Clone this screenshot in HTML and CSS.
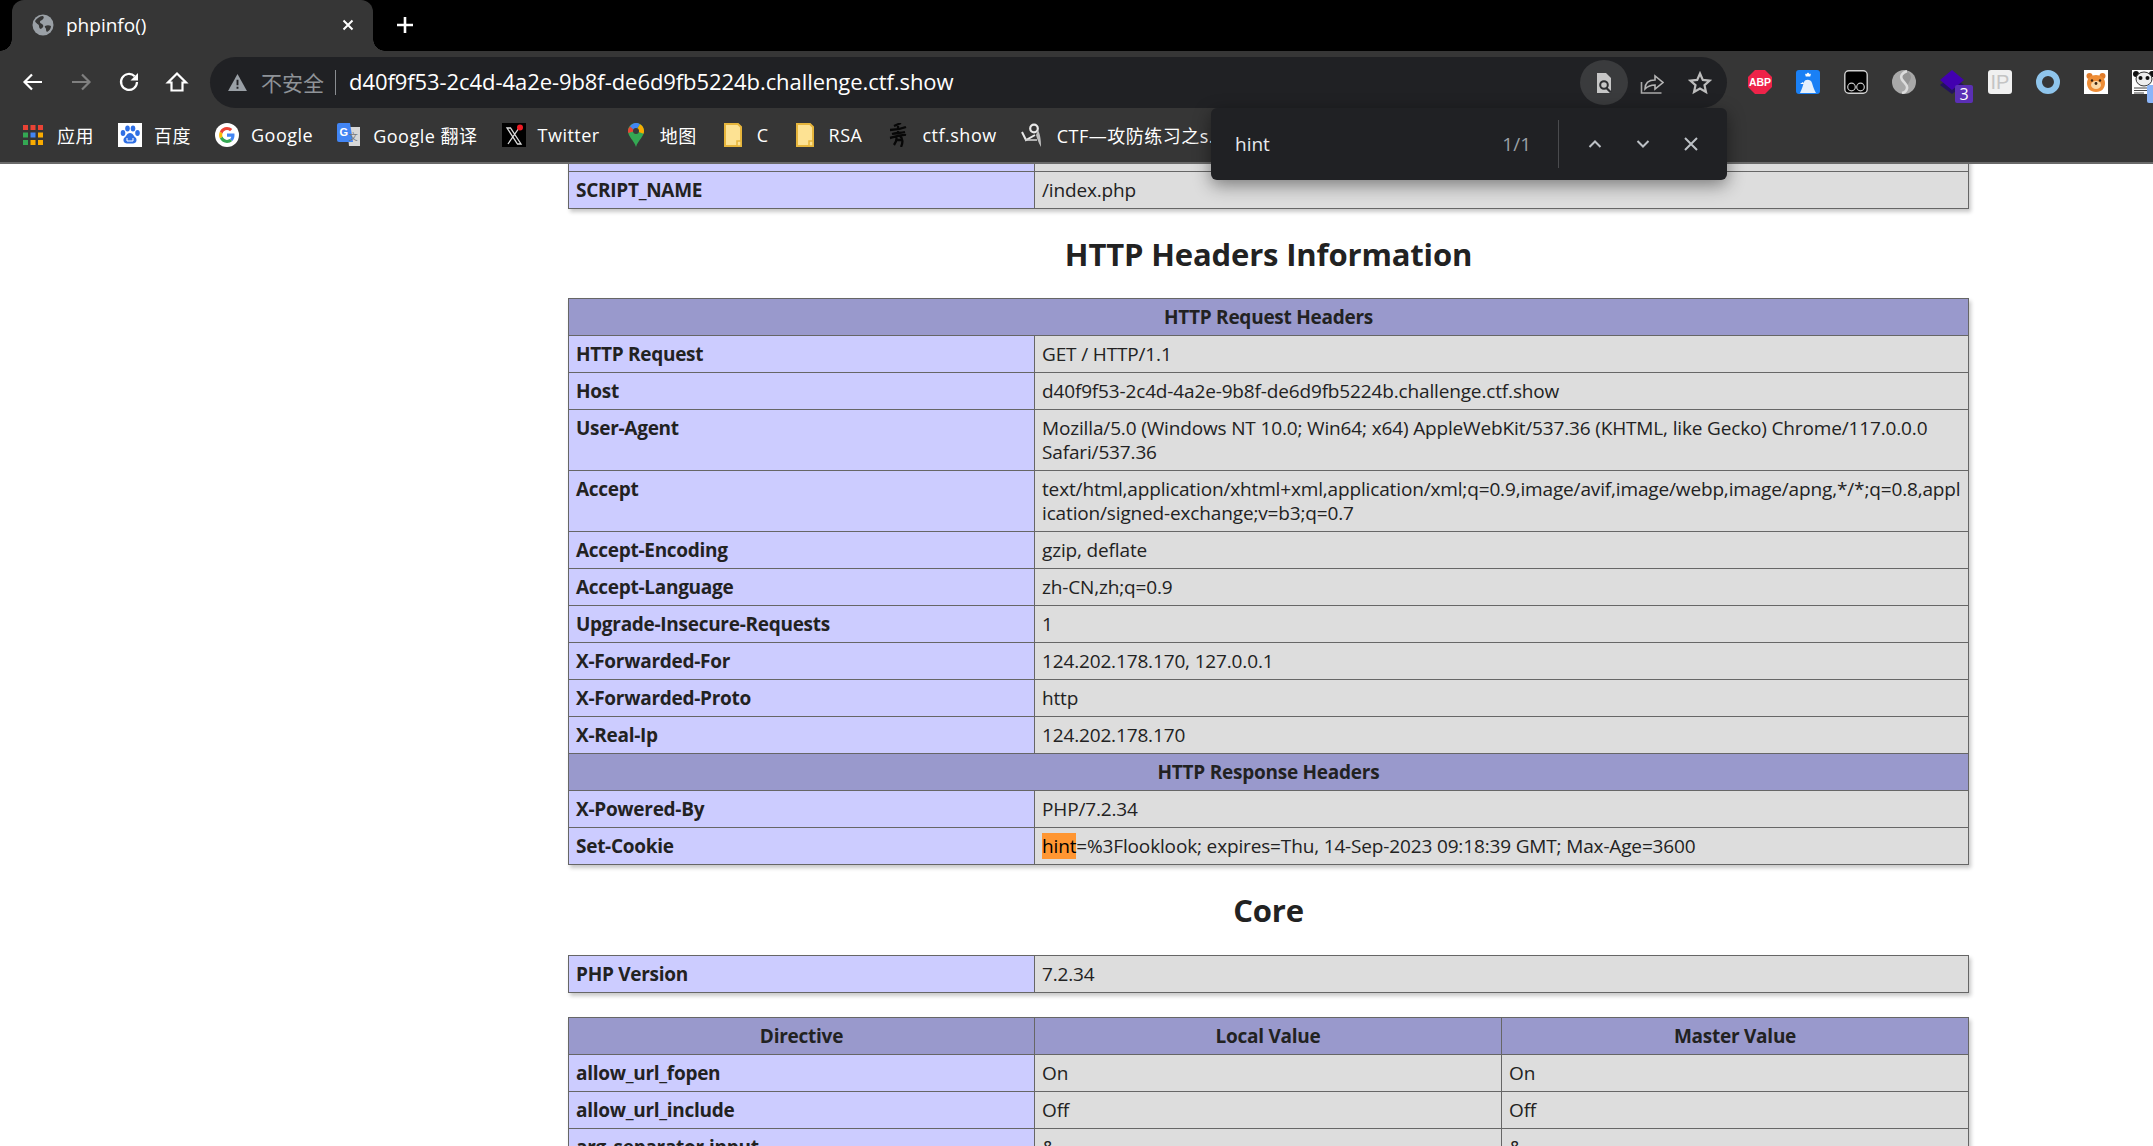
FILE: index.html
```html
<!DOCTYPE html>
<html lang="zh-CN">
<head>
<meta charset="utf-8">
<title>phpinfo()</title>
<link rel="stylesheet" href="styles.css">
</head>
<body>
<header class="chrome">
  <div class="tabstrip">
    <div class="tab">
      <svg class="favicon" viewBox="0 0 22 22"><circle cx="11" cy="11" r="10.5" fill="#9aa0a6"/><path d="M3 7c2-3 5-5 8-5 1 1 1 2 0 3-1 2-3 1-3 3s2 1 3 3c1 2-1 3-2 4-1 0-2-1-2-3S4 10 3 7zM13 12c2-1 4-1 6 0 0 3-2 5-4 6-1-1-1-2-1-3s-2-2-1-3z" fill="#363636"/></svg>
      <span class="tab-title">phpinfo()</span>
      <svg class="tab-close" viewBox="0 0 12 12"><path d="M1.5 1.5l9 9M10.5 1.5l-9 9" stroke="#fff" stroke-width="2"/></svg>
    </div>
    <svg class="new-tab" viewBox="0 0 18 18"><path d="M9 1v16M1 9h16" stroke="#fff" stroke-width="2.6"/></svg>
  </div>

  <div class="toolbar">
    <div class="nav">
      <svg class="nav-icon" viewBox="0 0 24 24"><path d="M21 12H4M11 4.500L3.500 12l7.500 7.500" fill="none" stroke="#fff" stroke-width="2.200"/></svg>
      <svg class="nav-icon" viewBox="0 0 24 24"><path d="M3 12h17M13 4.500l7.500 7.500-7.500 7.500" fill="none" stroke="#7f7f7f" stroke-width="2.200"/></svg>
      <svg class="nav-icon" viewBox="0 0 24 24"><path d="M20 12a8 8 0 1 1-2.300-5.700" fill="none" stroke="#fff" stroke-width="2.200"/><path d="M21 3v7.500h-7.500z" fill="#fff"/></svg>
      <svg class="nav-icon" viewBox="0 0 24 24"><path d="M12 3.500L3 12.500h3.500v8h11v-8H21z" fill="none" stroke="#fff" stroke-width="2.200" stroke-linejoin="miter"/></svg>
    </div>
    <div class="omnibox">
      <svg class="warn" viewBox="0 0 20 18"><path d="M10 0L20 18H0z" fill="#9aa0a6"/><path d="M9 6h2v6H9zM9 13.500h2v2H9z" fill="#202124"/></svg>
      <span class="insecure">不安全</span>
      <span class="url">d40f9f53-2c4d-4a2e-9b8f-de6d9fb5224b.challenge.ctf.show</span>
      <div class="omni-actions">
        <span class="lens">
          <svg viewBox="0 0 24 24" width="24" height="24"><path d="M5 2h9l5 5v15H5z" fill="#c6c6c6"/><circle cx="12" cy="14" r="3.800" fill="none" stroke="#2c2d30" stroke-width="2"/><path d="M14.500 17l4.500 4.500" stroke="#2c2d30" stroke-width="2.200"/></svg>
        </span>
        <svg class="omni-icon" viewBox="0 0 24 24"><path d="M1.500 11v11h20" fill="none" stroke="#a9a9a9" stroke-width="1.600"/><path d="M5 18c0-6 4-9 10-9V5l8 6.500-8 6.500v-4c-4 0-7 1-10 4z" fill="none" stroke="#b5b5b5" stroke-width="1.600"/></svg>
        <svg class="omni-icon" viewBox="0 0 24 24"><path d="M12 2.500l2.800 6.400 6.900.7-5.200 4.600 1.500 6.800-6-3.500-6 3.500 1.500-6.800-5.200-4.600 6.900-.7z" fill="none" stroke="#bdbdbd" stroke-width="2.200"/></svg>
      </div>
    </div>
    <div class="extensions">
      <svg class="ext" viewBox="0 0 24 24"><path d="M7 0h10l7 7v10l-7 7H7l-7-7V7z" fill="#ee2349"/><text x="12" y="16.200" class="abp">ABP</text></svg>
      <svg class="ext" viewBox="0 0 24 24"><rect width="24" height="24" rx="3" fill="#1a80f5"/><path d="M8 6l1.500 1L12 4.500 14.500 7 16 6l-1 4H9z" fill="#fff" transform="translate(3 -1) scale(.75)"/><path d="M4 23c2-4 3-8 4-11 1-3 7-3 8 1 1 3 2 7 4 10z" fill="#e4f0fd"/><path d="M7 12l-3 2 4 0z" fill="#fff"/></svg>
      <svg class="ext" viewBox="0 0 24 24"><rect x=".8" y=".8" width="22.400" height="22.400" rx="4" fill="#000" stroke="#d0d0d0" stroke-width="1.400"/><circle cx="7.500" cy="17" r="3.800" fill="none" stroke="#c8c8c8" stroke-width="1.200"/><circle cx="16.500" cy="17" r="3.800" fill="none" stroke="#c8c8c8" stroke-width="1.200"/></svg>
      <svg class="ext" viewBox="0 0 24 24"><circle cx="12" cy="12" r="12" fill="#a8a8a8"/><path d="M14 .3C9 2 7 6 9.500 9.500c2 2.800 5 4 5 8 0 2.500-1.500 4.500-4.500 6.300-3-2-5-4-5-7 0-3 3-5 3-8s1-6 6-8.500z" fill="#6f6f6f" transform="rotate(180 12 12)" opacity=".35"/><path d="M15 1c-5 2-7 5-5 8.500s6 5 5 9c-.4 2-2 4-5 4.500" fill="none" stroke="#dcdcdc" stroke-width="2.600"/></svg>
      <span class="ext-wrap">
        <svg class="ext" viewBox="0 0 24 24"><path d="M12 6l12 9-12 9-12-9z" fill="#23125e"/><path d="M12 0l12 10-12 10L0 10z" fill="#4200b0"/></svg>
        <span class="badge">3</span>
      </span>
      <svg class="ext" viewBox="0 0 24 24"><rect width="24" height="24" rx="3" fill="#f0f0f0"/><text x="12" y="19" class="ip">IP</text></svg>
      <svg class="ext" viewBox="0 0 24 24"><circle cx="12" cy="12" r="9" fill="none" stroke="#8fc5ec" stroke-width="6"/></svg>
      <svg class="ext" viewBox="0 0 24 24"><rect width="24" height="24" fill="#fff"/><circle cx="5.500" cy="6" r="3" fill="#e07b2a"/><circle cx="18.500" cy="6" r="3" fill="#e07b2a"/><path d="M12 22c-6 0-9-4-9-9s4-8 9-8 9 3 9 8-3 9-9 9z" fill="#ee8d36"/><ellipse cx="12" cy="15" rx="5" ry="4" fill="#fbd9a8"/><circle cx="8" cy="10.500" r="1.200" fill="#3a2412"/><circle cx="16" cy="10.500" r="1.200" fill="#3a2412"/><circle cx="12" cy="13.500" r="1.400" fill="#3a2412"/></svg>
      <span class="ext-wrap">
        <svg class="ext" viewBox="0 0 24 24"><rect width="24" height="24" fill="#fff"/><circle cx="4" cy="4" r="3" fill="#111"/><circle cx="20" cy="4" r="3" fill="#111"/><ellipse cx="12" cy="9" rx="8" ry="7" fill="#eee" stroke="#333"/><circle cx="8.500" cy="8" r="2" fill="#111"/><circle cx="15.500" cy="8" r="2" fill="#111"/><path d="M2 18h14M2 20.500h14M2 23h10" stroke="#444"/></svg>
        <span class="badge badge-blue"></span>
      </span>
    </div>
  </div>

  <nav class="bookmarks">
    <a class="bm">
      <svg class="bm-icon" viewBox="-2 -2 24 24"><path fill="#ea4335" d="M0 0h5v5H0zM7.500 0h5v5h-5zM15 0h5v5h-5z"/><path fill="#34a853" d="M0 7.500h5v5H0zM0 15h5v5H0z"/><path fill="#4285f4" d="M7.500 7.500h5v5h-5z"/><path fill="#f9ab00" d="M15 7.500h5v5h-5zM7.500 15h5v5h-5zM15 15h5v5h-5z"/></svg>
      <span>应用</span>
    </a>
    <a class="bm">
      <svg class="bm-icon" viewBox="0 0 24 24"><rect width="24" height="24" fill="#fff"/><g fill="#2f6fe4"><ellipse cx="5" cy="10" rx="2.300" ry="3"/><ellipse cx="9.500" cy="5.500" rx="2.300" ry="3"/><ellipse cx="15" cy="5.500" rx="2.300" ry="3"/><ellipse cx="19.500" cy="10" rx="2.300" ry="3"/><path d="M12 10c-3 0-3.500 3-5.500 4.500-2 2-1 6 2.500 6h6c3.500 0 4.500-4 2.500-6C15.500 13 15 10 12 10z"/></g><path d="M9 15v3h6v-3" fill="none" stroke="#fff"/></svg>
      <span>百度</span>
    </a>
    <a class="bm">
      <svg class="bm-icon" viewBox="0 0 24 24"><circle cx="12" cy="12" r="12" fill="#fff"/><path d="M19.500 12.200c0-.6 0-1.100-.1-1.600H12v3.100h4.300c-.2 1-.8 1.900-1.600 2.400l2.500 2c1.500-1.400 2.300-3.400 2.300-5.900z" fill="#4285f4"/><path d="M12 20c2.100 0 3.900-.7 5.200-1.900l-2.500-2c-.7.500-1.600.8-2.700.8-2.100 0-3.800-1.400-4.500-3.300L4.900 15.600C6.200 18.200 8.900 20 12 20z" fill="#34a853"/><path d="M7.500 13.600c-.4-1.100-.4-2.200 0-3.200L4.900 8.400c-1.100 2.200-1.100 4.900 0 7.200z" fill="#fbbc05"/><path d="M12 7.100c1.200 0 2.200.4 3 1.200l2.300-2.300C15.900 4.700 14 4 12 4 8.900 4 6.200 5.800 4.900 8.400l2.600 2C8.200 8.500 9.900 7.100 12 7.100z" fill="#ea4335"/></svg>
      <span>Google</span>
    </a>
    <a class="bm">
      <svg class="bm-icon" viewBox="0 0 24 24"><path d="M10 4h13v19H12z" fill="#d7d7d7"/><path d="M2 0h11l3 19H2a2 2 0 0 1-2-2V2a2 2 0 0 1 2-2z" fill="#4285f4"/><text x="7" y="13" class="gt">G</text><text x="16.500" y="17" class="gt2">文</text></svg>
      <span>Google 翻译</span>
    </a>
    <a class="bm">
      <svg class="bm-icon" viewBox="0 0 24 24"><rect width="24" height="24" fill="#000"/><path d="M5 5h3.500L19 21h-3.500zM17 5L6 21" fill="none" stroke="#ddd" stroke-width="1.300"/><circle cx="18" cy="4.500" r="3" fill="#ee1c25"/></svg>
      <span>Twitter</span>
    </a>
    <a class="bm">
      <svg class="bm-icon" viewBox="0 0 24 24"><path d="M12 0C7 0 4 4 4 8c0 6 6 9 8 16 2-7 8-10 8-16 0-4-3-8-8-8z" fill="#34a853"/><path d="M6 3.500C7.500 1.500 9.500 0 12 0c1.500 0 3 .4 4 1.200L11 8z" fill="#4285f4"/><path d="M16 1.200C18.500 2.500 20 5 20 8c0 1-.2 2-.5 2.800L12 8z" fill="#f9ab00"/><path d="M4.400 10C4 9 4 8.500 4 8c0-1.800.8-3.400 2-4.500L11 8z" fill="#ea4335"/><circle cx="12" cy="8" r="3" fill="#3a3a3a"/></svg>
      <span>地图</span>
    </a>
    <a class="bm">
      <svg class="bm-icon" viewBox="-3 0 24 24"><path d="M1 1h13l3 3v19H1z" fill="#fde293" stroke="#e6b53c" stroke-width="2"/><path d="M13 23v-5h4v5z" fill="#fde293" stroke="#e6b53c" stroke-width="1.500"/></svg>
      <span>C</span>
    </a>
    <a class="bm">
      <svg class="bm-icon" viewBox="-3 0 24 24"><path d="M1 1h13l3 3v19H1z" fill="#fde293" stroke="#e6b53c" stroke-width="2"/><path d="M13 23v-5h4v5z" fill="#fde293" stroke="#e6b53c" stroke-width="1.500"/></svg>
      <span>RSA</span>
    </a>
    <a class="bm">
      <svg class="bm-icon" viewBox="-3 0 24 24"><path d="M12 0L5 3M1 7c5 0 11-1 16-3M9 3v8M3 11c4-1 9-1 13-2M1 15c5-1 12-4 16-3M7 13c1 2 0 6-2 9M11 13c3 2 3 7 1 11M8 17h5" fill="none" stroke="#070707" stroke-width="2.300"/></svg>
      <span>ctf.show</span>
    </a>
    <a class="bm">
      <svg class="bm-icon" viewBox="0 0 24 24"><circle cx="13" cy="5.500" r="3.800" fill="none" stroke="#e8e8e8" stroke-width="2.200"/><path d="M1 9l4 8 9-5" fill="none" stroke="#e8e8e8" stroke-width="2"/><path d="M4 17h12" stroke="#cfcfcf" stroke-width="1.600"/><path d="M17 7c2 4 3 9 3 17-3-5-4-9-5-12z" fill="#bdbdbd"/></svg>
      <span>CTF—攻防练习之s...</span>
    </a>
  </nav>
</header>

<main class="page">
  <table class="info first">
    <colgroup><col class="col-key"><col></colgroup>
    <tr><td class="e">REQUEST_URI</td><td class="v">/</td></tr>
    <tr><td class="e">SCRIPT_NAME</td><td class="v">/index.php</td></tr>
  </table>
  <h2 class="section">HTTP Headers Information</h2>
  <table class="info">
    <colgroup><col class="col-key"><col></colgroup>
    <tr class="h"><th colspan="2">HTTP Request Headers</th></tr>
    <tr><td class="e">HTTP Request</td><td class="v">GET / HTTP/1.1</td></tr>
    <tr><td class="e">Host</td><td class="v">d40f9f53-2c4d-4a2e-9b8f-de6d9fb5224b.challenge.ctf.show</td></tr>
    <tr><td class="e">User-Agent</td><td class="v">Mozilla/5.0 (Windows NT 10.0; Win64; x64) AppleWebKit/537.36 (KHTML, like Gecko) Chrome/117.0.0.0<br>Safari/537.36</td></tr>
    <tr><td class="e">Accept</td><td class="v">text/html,application/xhtml+xml,application/xml;q=0.9,image/avif,image/webp,image/apng,*/*;q=0.8,appl<br>ication/signed-exchange;v=b3;q=0.7</td></tr>
    <tr><td class="e">Accept-Encoding</td><td class="v">gzip, deflate</td></tr>
    <tr><td class="e">Accept-Language</td><td class="v">zh-CN,zh;q=0.9</td></tr>
    <tr><td class="e">Upgrade-Insecure-Requests</td><td class="v">1</td></tr>
    <tr><td class="e">X-Forwarded-For</td><td class="v">124.202.178.170, 127.0.0.1</td></tr>
    <tr><td class="e">X-Forwarded-Proto</td><td class="v">http</td></tr>
    <tr><td class="e">X-Real-Ip</td><td class="v">124.202.178.170</td></tr>
    <tr class="h"><th colspan="2">HTTP Response Headers</th></tr>
    <tr><td class="e">X-Powered-By</td><td class="v">PHP/7.2.34</td></tr>
    <tr><td class="e">Set-Cookie</td><td class="v"><mark class="match">hint</mark>=%3Flooklook; expires=Thu, 14-Sep-2023 09:18:39 GMT; Max-Age=3600</td></tr>
  </table>
  <h2 class="section">Core</h2>
  <table class="info spaced">
    <colgroup><col class="col-key"><col></colgroup>
    <tr><td class="e">PHP Version</td><td class="v">7.2.34</td></tr>
  </table>
  <table class="info">
    <colgroup><col class="col-key"><col class="col-local"><col></colgroup>
    <tr class="h"><th>Directive</th><th>Local Value</th><th>Master Value</th></tr>
    <tr><td class="e">allow_url_fopen</td><td class="v">On</td><td class="v">On</td></tr>
    <tr><td class="e">allow_url_include</td><td class="v">Off</td><td class="v">Off</td></tr>
    <tr><td class="e">arg_separator.input</td><td class="v">&amp;</td><td class="v">&amp;</td></tr>
    <tr><td class="e">arg_separator.output</td><td class="v">&amp;</td><td class="v">&amp;</td></tr>
  </table>
</main>

<div class="findbar">
  <span class="find-query">hint</span>
  <span class="find-count">1/1</span>
  <span class="find-sep"></span>
  <svg class="find-btn" viewBox="0 0 16 16"><path d="M2.500 11L8 5.500 13.500 11" fill="none" stroke="#bdc1c6" stroke-width="2"/></svg>
  <svg class="find-btn" viewBox="0 0 16 16"><path d="M2.500 5L8 10.500 13.500 5" fill="none" stroke="#bdc1c6" stroke-width="2"/></svg>
  <svg class="find-btn" viewBox="0 0 16 16"><path d="M2 2l12 12M14 2L2 14" fill="none" stroke="#bdc1c6" stroke-width="2"/></svg>
</div>
</body>
</html>
```
FILE: styles.css
```css
* { box-sizing: border-box; }
html, body { margin: 0; height: 100%; }
body {
  overflow: hidden;
  display: flex;
  flex-direction: column;
  height: 100vh;
  background: #fff;
  font-family: "Open Sans", "Noto Sans", "Noto Sans CJK SC", sans-serif;
}
.chrome { flex: none; background: #363636; border-bottom: 2px solid #6a6a6a; height: 164px; }

.tabstrip { height: 51px; background: #000; display: flex; align-items: center; padding-left: 12px; }
.tab {
  position: relative;
  width: 361px;
  height: 51px;
  background: #363636;
  border-radius: 12px 12px 0 0;
  display: flex;
  align-items: center;
  padding: 0 19px 2px 20px;
  color: #fff;
}
.tab::before, .tab::after {
  content: "";
  position: absolute;
  bottom: 0;
  width: 12px;
  height: 12px;
}
.tab::before { left: -12px; background: radial-gradient(circle at 0 0, #000 11.500px, #363636 12px); }
.tab::after { right: -12px; background: radial-gradient(circle at 100% 0, #000 11.500px, #363636 12px); }
.favicon { width: 22px; height: 22px; flex: none; }
.tab-title { margin-left: 12px; font-size: 19px; flex: 1; }
.tab-close { width: 12px; height: 12px; flex: none; }
.new-tab { width: 18px; height: 18px; margin-left: 23px; margin-top: -2px; }

.toolbar { height: 57px; padding-top: 6px; display: flex; align-items: stretch; }
.nav { width: 210px; padding: 0 0 2px 21px; display: flex; gap: 24px; align-items: center; flex: none; }
.nav-icon { width: 24px; height: 24px; flex: none; }

.omnibox {
  width: 1517px;
  flex: none;
  background: #202124;
  border-radius: 26px;
  display: flex;
  align-items: center;
  padding: 0 3px 0 18px;
}
.warn { width: 19px; height: 17px; flex: none; }
.insecure {
  margin-left: 14px;
  padding-right: 11px;
  border-right: 1px solid #8a8d91;
  color: #8f9398;
  font-family: "Noto Sans CJK SC", sans-serif;
  font-size: 21px;
  line-height: 25px;
}
.url { margin: -3px 0 0 13px; color: #fff; font-size: 22px; letter-spacing: -.07px; white-space: nowrap; }
.omni-actions { margin-left: auto; display: flex; align-items: center; }
.lens {
  width: 48px;
  height: 45px;
  border-radius: 50%;
  background: #3a3b3d;
  display: flex;
  align-items: center;
  justify-content: center;
}
.omni-icon { width: 24px; height: 24px; margin: 0 12px; flex: none; }

.extensions { display: flex; padding: 0 0 2px 21px; align-items: center; gap: 24px; }
.ext { width: 24px; height: 24px; display: block; flex: none; }
.ext-wrap { position: relative; width: 24px; height: 24px; flex: none; }
.badge {
  position: absolute;
  left: 15px;
  top: 15px;
  width: 18px;
  height: 18px;
  border-radius: 2px;
  background: #5b2fb5;
  color: #fff;
  font-size: 16px;
  line-height: 18px;
  text-align: center;
}
.badge-blue { background: #8ab4f8; }
.abp { font: 700 10.500px "Liberation Sans", sans-serif; fill: #fff; text-anchor: middle; }
.ip { font: 400 20px "Liberation Sans", sans-serif; fill: #c4c4c4; text-anchor: middle; }
.gt { font: 700 11px "Liberation Sans", sans-serif; fill: #fff; text-anchor: middle; }
.gt2 { font: 400 9px "Noto Sans CJK SC", sans-serif; fill: #777; text-anchor: middle; }

.bookmarks {
  height: 54px;
  padding-left: 21px;
  display: flex;
  align-items: center;
  overflow: hidden;
  color: #fff;
  font-size: 18px;
  letter-spacing: .5px;
  white-space: nowrap;
}
.bm { display: flex; align-items: center; gap: 12px; margin-right: 24px; flex: none; }
.bm-icon { width: 24px; height: 24px; flex: none; }

.page { flex: 1; min-height: 0; overflow: hidden; padding-left: 568px; color: #222; }
.info {
  width: 1401px;
  table-layout: fixed;
  border-collapse: collapse;
  box-shadow: 2px 3px 4px rgba(0, 0, 0, .22);
  font-size: 19px;
  line-height: 24px;
  letter-spacing: -.15px;
}
.col-key { width: 466px; }
.col-local { width: 467px; }
.first { margin-top: -30px; }
.spaced { margin: 1px 0 24px; }
.info td, .info th { border: 1px solid #666; padding: 6px 7px; vertical-align: baseline; white-space: nowrap; }
.info th { text-align: center; font-weight: 700; background: #99c; letter-spacing: -.25px; }
.info .e { background: #ccf; font-weight: 700; letter-spacing: -.28px; }
.v { background: #ddd; }
.section { margin: 0; height: 89px; line-height: 91px; text-align: center; width: 1401px; font-size: 31px; font-weight: 700; letter-spacing: -.15px; }
.match { background: #ff9632; color: #000; }

.findbar {
  position: absolute;
  left: 1211px;
  top: 108px;
  width: 516px;
  height: 72px;
  background: #202124;
  border-radius: 6px;
  box-shadow: 0 5px 18px rgba(0, 0, 0, .45);
  display: flex;
  align-items: center;
  padding: 0 28px 0 24px;
  font-size: 19px;
}
.find-query { color: #e8eaed; flex: 1; }
.find-count { color: #9aa0a6; }
.find-sep { width: 1px; height: 48px; margin: 0 28px 0 27px; background: #4a4b4e; }
.find-btn { width: 16px; height: 16px; flex: none; margin-right: 32px; }
.find-btn:last-child { margin-right: 0; }
```
